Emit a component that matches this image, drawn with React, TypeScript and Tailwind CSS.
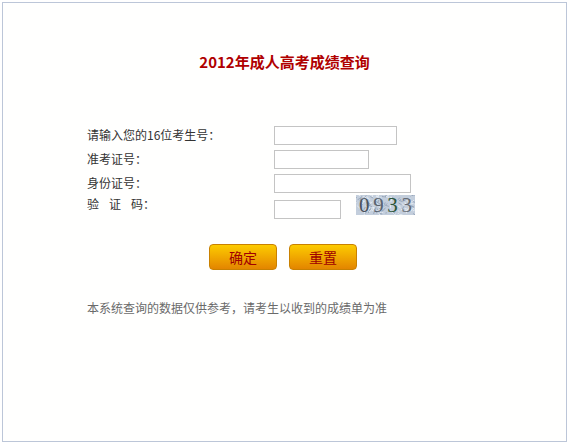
import React from "react";

function Captcha() {
  const strokes: React.ReactNode[] = [];
  let s = 7;
  const rnd = () => {
    s = (s * 9301 + 49297) % 233280;
    return s / 233280;
  };
  for (let i = 0; i < 140; i++) {
    const x = rnd() * 59;
    const y = rnd() * 20;
    const dx = (rnd() - 0.5) * 8;
    const dy = (rnd() - 0.5) * 8;
    const c = rnd() > 0.5 ? "#8e9db2" : "#eef2f7";
    strokes.push(
      <line key={i} x1={x} y1={y} x2={x + dx} y2={y + dy} stroke={c} strokeWidth={0.8} />
    );
  }
  return (
    <div className="relative w-[59px] h-[20px]">
      <svg width="59" height="20" className="absolute left-0 top-0">
        <rect width="59" height="20" fill="#c3cedc" />
        {strokes}
      </svg>
      <div
        className="relative w-[59px] h-[20px] flex items-center justify-between px-[3px] text-[21px] leading-[20px]"
        style={{ fontFamily: '"Liberation Serif", serif' }}
      >
        <span className="text-[#4a525c]">0</span>
        <span className="text-[#59636e]">9</span>
        <span className="text-[#2b5436]">3</span>
        <span className="text-[#666d76]">3</span>
      </div>
    </div>
  );
}

export default function App() {
  const cjk = { fontFamily: '"Noto Sans CJK SC", "Noto Sans", sans-serif' };
  return (
    <div className="w-[569px] h-[442px] bg-white pl-[2px] pt-[2px] pr-[2px]" style={cjk}>
      <div className="w-[565px] h-[440px] border border-[#bcc6d8] bg-[#fffffe] flex flex-col">
        <div className="mt-[49px] h-[20px] flex items-center justify-center text-[15px] font-bold text-[#b00000] leading-[20px]">
          2012年成人高考成绩查询
        </div>

        <div className="mt-[51px] pl-[84px] flex flex-col text-[12px] text-[#333]">
          <div className="flex items-center h-[24px]">
            <div className="w-[187px] leading-[16px]">请输入您的16位考生号：</div>
            <div className="w-[123px] h-[19px] border border-[#c4c4c4] bg-white" />
          </div>
          <div className="flex items-center h-[24px]">
            <div className="w-[187px] leading-[16px]">准考证号：</div>
            <div className="w-[95px] h-[19px] border border-[#c4c4c4] bg-white" />
          </div>
          <div className="flex items-center h-[24px]">
            <div className="w-[187px] leading-[16px]">身份证号：</div>
            <div className="w-[137px] h-[19px] border border-[#c4c4c4] bg-white" />
          </div>
          <div className="flex items-start h-[26px]">
            <div className="w-[187px] h-[18px] leading-[18px] flex">
              <span className="mr-[10px]">验</span>
              <span className="mr-[10px]">证</span>
              <span>码：</span>
            </div>
            <div className="mt-[5px] w-[67px] h-[19px] border border-[#c4c4c4] bg-white" />
            <div className="ml-[15px]">
              <Captcha />
            </div>
          </div>
        </div>

        <div className="mt-[23px] flex justify-center gap-[12px] pr-[3px]">
          <div className="w-[68px] h-[26px] rounded-[4px] border border-[#c98100] bg-gradient-to-b from-[#fccb00] to-[#e38500] flex items-center justify-center text-[14px] text-[#a00000]">
            确定
          </div>
          <div className="w-[68px] h-[26px] rounded-[4px] border border-[#c98100] bg-gradient-to-b from-[#fccb00] to-[#e38500] flex items-center justify-center text-[14px] text-[#a00000]">
            重置
          </div>
        </div>

        <div className="mt-[30px] pl-[84px] text-[12px] leading-[16px] text-[#6a6a6a]">
          本系统查询的数据仅供参考，请考生以收到的成绩单为准
        </div>
      </div>
    </div>
  );
}
